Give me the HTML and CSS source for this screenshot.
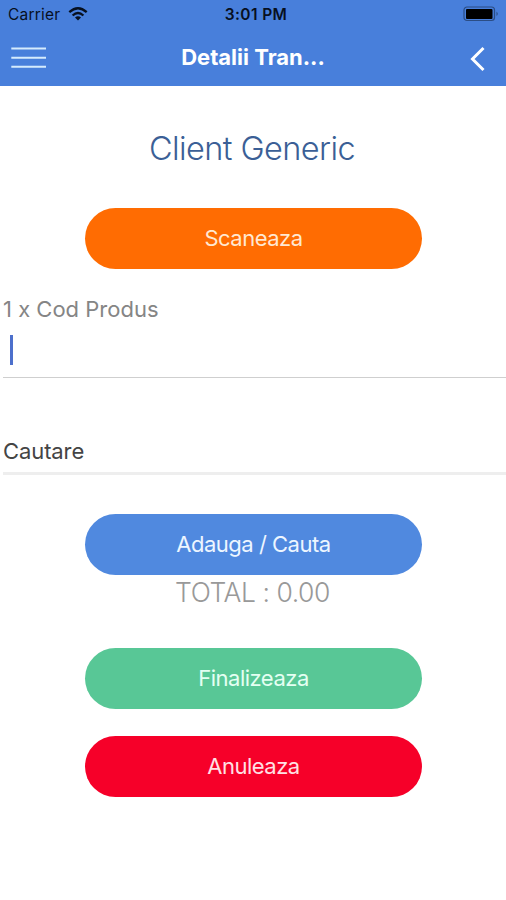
FILE: index.html
```html
<!DOCTYPE html>
<html lang="ro">
<head>
<meta charset="utf-8">
<title>Detalii Tranzactie</title>
<link rel="stylesheet" href="styles.css">
</head>
<body>
<header class="header">
  <div class="status">
    <div class="carrier"><span class="carrier-name">Carrier</span>
      <svg class="wifi" width="20" height="14" viewBox="0 0 20 14" fill="none" stroke="#07101f" stroke-width="2.3"><path d="M1.3 5.2Q10 -2.6 18.7 5.2M4.6 8.5Q10 3.6 15.4 8.5"/><path d="M7 10.6Q10 8 13 10.6L10 13.6Z" fill="#07101f" stroke="none"/></svg>
    </div>
    <span class="time">3:01 PM</span>
    <svg class="battery" width="37" height="16" viewBox="0 0 37 16"><rect x="1" y="1" width="30.5" height="13.5" rx="3" fill="none" stroke="#2b4d85" stroke-width="1.2"/><rect x="3" y="3" width="26.5" height="10" rx="1" fill="#000"/><path d="M33.5 5.5Q36 7.8 33.5 10Z" fill="#2b4d85"/></svg>
  </div>
  <nav class="navbar">
    <svg class="menu" width="36" height="24" viewBox="0 0 36 24" stroke="#d5ebfd" stroke-width="2"><path d="M0.3 2.5H35M0.3 11.7H35M0.3 20.7H35"/></svg>
    <h1 class="nav-title">Detalii Tran...</h1>
    <svg class="back" width="16" height="26" viewBox="0 0 16 26" fill="none" stroke="#fff" stroke-width="3"><path d="M13.5 2L2.5 13L13.5 24"/></svg>
  </nav>
</header>
<main class="content">
  <h2 class="client"><span>Client Generic</span></h2>
  <button class="button scan"><span>Scaneaza</span></button>
  <section class="field product">
    <label class="label">1 x Cod Produs</label>
    <div class="entry"><i class="caret"></i></div>
  </section>
  <section class="field search"><span class="search-text">Cautare</span></section>
  <button class="button add"><span>Adauga / Cauta</span></button>
  <p class="total"><span>TOTAL : 0.00</span></p>
  <button class="button finish"><span>Finalizeaza</span></button>
  <button class="button cancel"><span>Anuleaza</span></button>
</main>
</body>
</html>
```
FILE: styles.css
```css
* { box-sizing: border-box; }
body {
  margin: 0;
  min-height: 900px;
  background: #fff;
  font-family: Inter, "Liberation Sans", sans-serif;
}
h1, h2, p { margin: 0; font-weight: 400; }
svg { display: block; }
.header { height: 86px; background: #487fdb; }
.status {
  display: grid;
  grid-template-columns: 1fr auto 1fr;
  align-items: center;
  height: 29px;
  padding: 0 6px 0 8px;
  color: #07101f;
}
.carrier { display: flex; align-items: center; gap: 8px; }
.carrier-name { font-size: 15.5px; letter-spacing: 0.2px; }
.wifi { margin-top: -2px; }
.time { font-size: 15.5px; font-weight: 600; letter-spacing: 0.4px; margin-left: 4px; }
.battery { justify-self: end; margin-top: -1px; }
.navbar {
  display: grid;
  grid-template-columns: 1fr auto 1fr;
  align-items: center;
  height: 57px;
  padding: 0 20px 0 11px;
}
.nav-title { font-size: 22px; line-height: 56px; font-weight: 700; color: #fff; margin: -2px 0 0 9px; }
.back { justify-self: end; margin-top: 2px; }
.content { display: flex; flex-direction: column; align-items: center; padding-left: 1px; }
.client {
  margin: 43px 3px 0 0;
  font-size: 32.5px;
  line-height: 40px;
  font-weight: 350;
  color: #3b5f96;
  letter-spacing: -0.6px;
}
.button {
  display: flex;
  align-items: center;
  justify-content: center;
  width: 337px;
  height: 61px;
  padding: 0 0 2px;
  border: 0;
  border-radius: 31px;
  color: #fff;
  font-family: inherit;
  font-size: 22px;
  letter-spacing: -0.5px;
}
.scan { margin-top: 39px; background: #ff6c02; color: #ffe8d2; }
.add { margin-top: 39px; background: #5089df; color: #edf6ff; }
.finish { margin-top: 42px; background: #58c796; color: #e4fff2; }
.cancel { margin-top: 27px; background: #f60029; color: #ffe0e5; }
.field { align-self: stretch; margin-left: 2px; }
.product { height: 109px; padding-top: 25px; border-bottom: 1px solid #cfcfcf; }
.label { display: block; font-size: 22px; line-height: 30px; color: #858585; }
.entry { padding: 11px 0 0 7px; }
.caret { display: block; width: 3px; height: 30px; background: #4d70cc; }
.search { height: 97px; padding-top: 58px; border-bottom: 3px solid #eee; }
.search-text { display: block; font-size: 22px; line-height: 30px; color: #444; letter-spacing: -0.1px; }
.total { margin: 2px 2px -1px 0; font-size: 26.5px; line-height: 30px; font-weight: 300; color: #999; letter-spacing: -0.45px; }
```
